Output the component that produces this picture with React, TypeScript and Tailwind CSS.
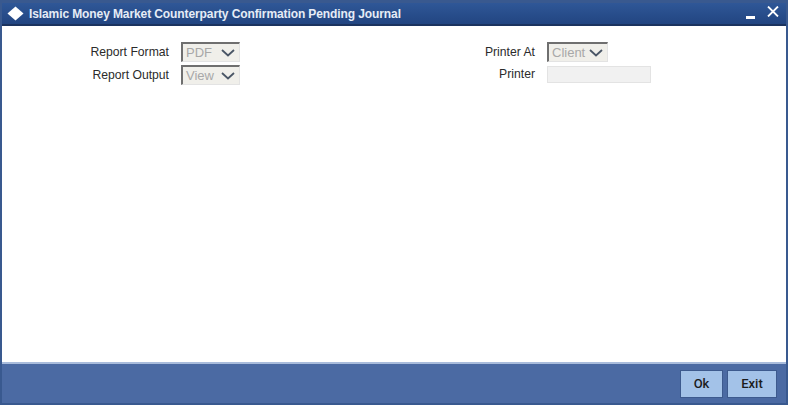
import React from 'react';

const font = { fontFamily: '"Liberation Sans", Arial, sans-serif' };

const FakeSelect: React.FC<{ value: string; width: string }> = ({ value, width }) => (
  <div className={`flex items-center justify-between h-[20px] ${width} bg-[#f0efea] border-t-2 border-l-2 border-t-[#6f6f6f] border-l-[#6f6f6f] border-b border-r border-b-[#e3e3e3] border-r-[#e3e3e3] pl-[3px] pr-[2px]`}>
    <span className="text-[13px] leading-none text-[#a8a8a8]">{value}</span>
    <svg width="14" height="8" viewBox="0 0 14 8" className="mr-[2px]">
      <path d="M1 1 L7 6.5 L13 1" fill="none" stroke="#4a5666" strokeWidth="1.8" />
    </svg>
  </div>
);

const Row: React.FC<{ label: string; children: React.ReactNode }> = ({ label, children }) => (
  <div className="flex items-center">
    <span className="w-[167px] text-right text-[12.2px] text-[#2b2b2b] mr-[12px]">{label}</span>
    {children}
  </div>
);

const App: React.FC = () => {
  return (
    <div className="w-[788px] h-[405px] flex flex-col bg-[#3a5c98] border-2 border-t-[3px] border-[#39598f] overflow-hidden" style={font}>
      {/* Title bar */}
      <div className="h-[23px] flex items-center bg-gradient-to-b from-[#2f5797] to-[#224581] border-b-2 border-b-[#1b335f] shrink-0">
        <svg width="17" height="15" viewBox="0 0 17 15" className="ml-[5px]">
          <path d="M8.5 0.5 L16.5 7.5 L8.5 14.5 L0.5 7.5 Z" fill="#ffffff" />
        </svg>
        <span className="ml-[5px] text-[12px] font-bold tracking-[-0.1px] text-[#e6ecf6]">
          Islamic Money Market Counterparty Confirmation Pending Journal
        </span>
        <div className="ml-auto flex items-center mr-[7px]">
          <div className="w-[9px] h-[3px] bg-white mt-[7px] mr-[12px]" />
          <svg width="12" height="11" viewBox="0 0 12 11" className="mb-[5px]">
            <path d="M1 0.5 L11 10.5 M11 0.5 L1 10.5" stroke="#ffffff" strokeWidth="1.8" />
          </svg>
        </div>
      </div>

      {/* Form */}
      <div className="flex-1 bg-white flex pt-[16px]">
        <div className="flex flex-col gap-[3px] w-[366px]">
          <Row label="Report Format">
            <FakeSelect value="PDF" width="w-[59px]" />
          </Row>
          <Row label="Report Output">
            <FakeSelect value="View" width="w-[59px]" />
          </Row>
        </div>
        <div className="flex flex-col gap-[3px]">
          <Row label="Printer At">
            <FakeSelect value="Client" width="w-[61px]" />
          </Row>
          <Row label="Printer">
            <div className="w-[104px] h-[17px] bg-[#f1f1f1] border border-[#e3e3e3]" />
          </Row>
        </div>
      </div>

      {/* Footer */}
      <div className="h-[41px] shrink-0 flex items-center justify-end gap-[4px] bg-[#4b6aa3] border-t-2 border-t-[#a9bcdc] pr-[9px]">
        <button className="w-[43px] h-[28px] bg-[#a3c2e8] border border-[#3d5a8e] text-[13px] font-medium text-[#1c1c1c]" style={{ fontFamily: 'Roboto, sans-serif' }}>Ok</button>
        <button className="w-[50px] h-[28px] bg-[#a3c2e8] border border-[#3d5a8e] text-[13px] font-medium text-[#1c1c1c]" style={{ fontFamily: 'Roboto, sans-serif' }}>Exit</button>
      </div>
    </div>
  );
};

export default App;
